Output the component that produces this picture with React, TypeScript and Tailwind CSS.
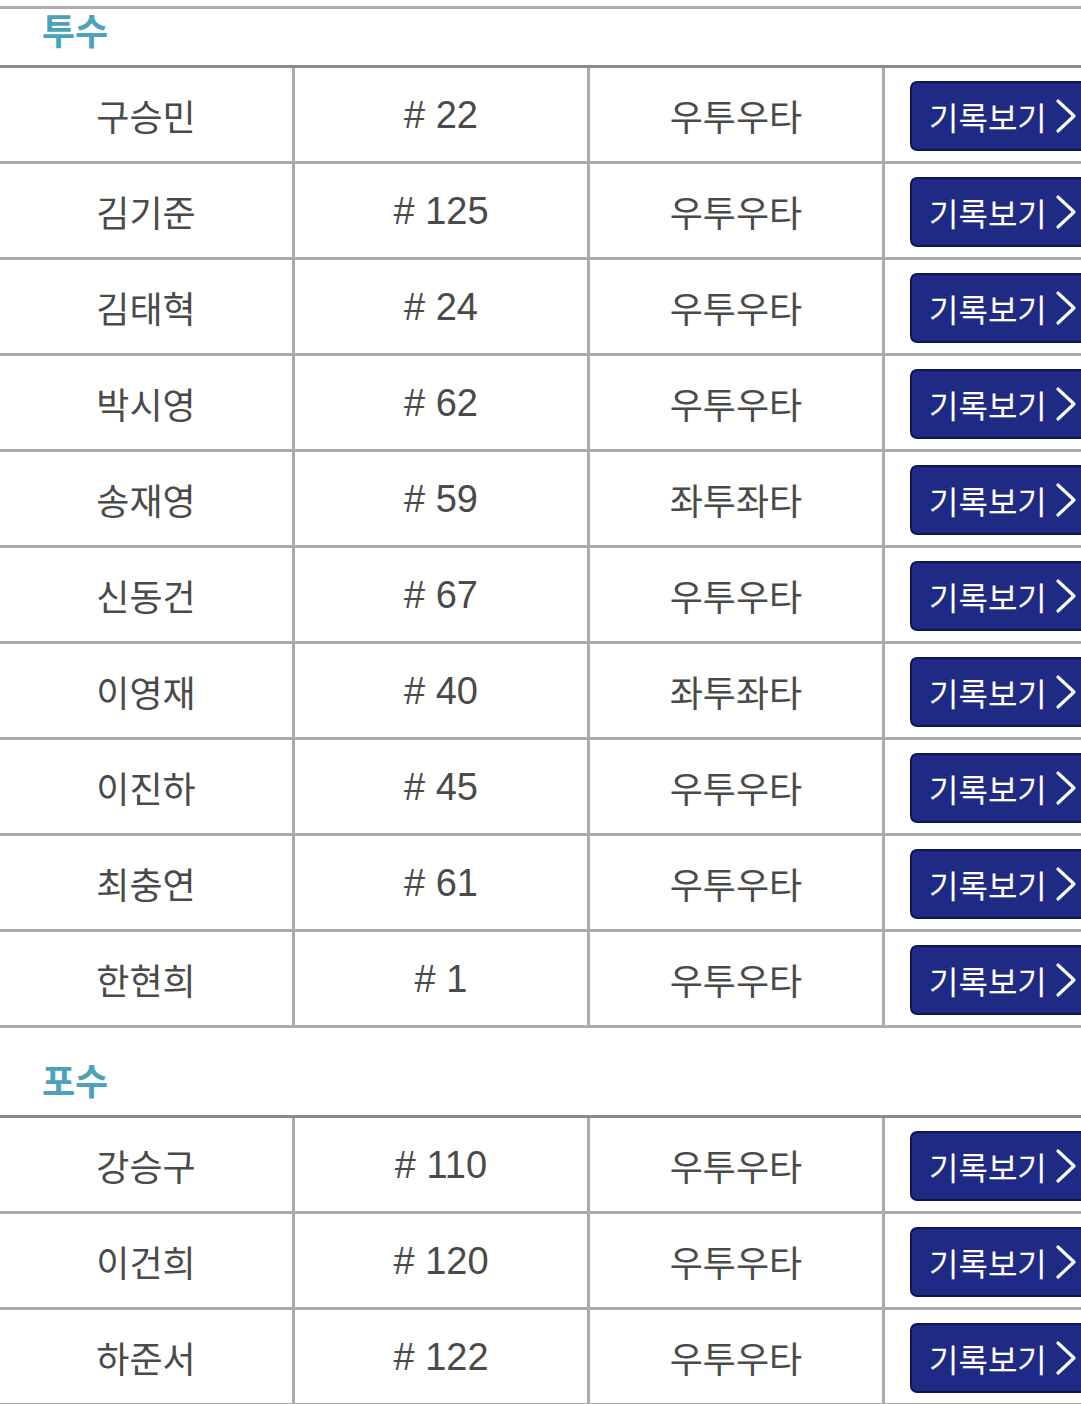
const pitchers = [
  { name: "구승민", no: "22", hand: "우투우타" },
  { name: "김기준", no: "125", hand: "우투우타" },
  { name: "김태혁", no: "24", hand: "우투우타" },
  { name: "박시영", no: "62", hand: "우투우타" },
  { name: "송재영", no: "59", hand: "좌투좌타" },
  { name: "신동건", no: "67", hand: "우투우타" },
  { name: "이영재", no: "40", hand: "좌투좌타" },
  { name: "이진하", no: "45", hand: "우투우타" },
  { name: "최충연", no: "61", hand: "우투우타" },
  { name: "한현희", no: "1", hand: "우투우타" },
];

const catchers = [
  { name: "강승구", no: "110", hand: "우투우타" },
  { name: "이건희", no: "120", hand: "우투우타" },
  { name: "하준서", no: "122", hand: "우투우타" },
];

type Player = { name: string; no: string; hand: string };

function RecordButton() {
  return (
    <button className="flex items-center h-[70px] w-[250px] pl-[17px] rounded-[7px] bg-[#1f2a84] border-2 border-[#0e1550] text-white text-[32px] leading-none">
      <span>기록보기</span>
      <svg width="26" height="38" viewBox="0 0 26 38" className="ml-[6px]" fill="none">
        <path d="M5 4 L21 19 L5 34" stroke="white" strokeWidth="3.2" strokeLinecap="round" strokeLinejoin="round" />
      </svg>
    </button>
  );
}

function PlayerRow({ p }: { p: Player }) {
  return (
    <div className="flex h-[96px] border-b-[3px] border-[#ababab] text-[#4a4a4a]">
      <div className="w-[295px] shrink-0 border-r-[3px] border-[#ababab] flex items-center justify-center text-[36px]">
        {p.name}
      </div>
      <div className="w-[295px] shrink-0 border-r-[3px] border-[#ababab] flex items-center justify-center pt-[2px] text-[38px] font-['Liberation_Sans',sans-serif]">
        # {p.no}
      </div>
      <div className="w-[295px] shrink-0 border-r-[3px] border-[#ababab] flex items-center justify-center text-[36px]">
        {p.hand}
      </div>
      <div className="w-[295px] shrink-0 flex items-center pl-[25px] pt-[2px]">
        <RecordButton />
      </div>
    </div>
  );
}

function Section({ title, players, first }: { title: string; players: Player[]; first?: boolean }) {
  return (
    <div className={first ? "" : "mt-[31px]"}>
      <div className="h-[56px] pl-[42px] pt-[2px]">
        <h3 className="text-[36px] leading-none font-bold text-[#4ba3bb]">{title}</h3>
      </div>
      <div className="border-t-[3px] border-[#8a8a8a] w-[1180px]">
        {players.map((p) => (
          <PlayerRow key={p.name} p={p} />
        ))}
      </div>
    </div>
  );
}

export default function App() {
  return (
    <div className="w-[1081px] h-[1404px] overflow-hidden bg-white font-['Noto_Sans_CJK_KR','Noto_Sans',sans-serif]">
      <div className="mt-[6px] h-[3px] bg-[#ababab]" />
      <Section title="투수" players={pitchers} first />
      <Section title="포수" players={catchers} />
    </div>
  );
}
